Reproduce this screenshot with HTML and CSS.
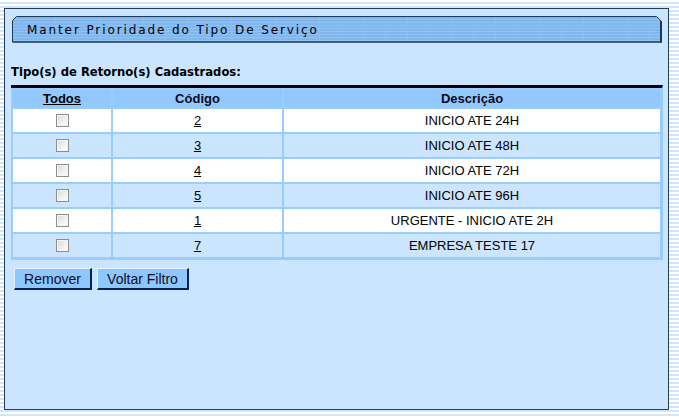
FILE: index.html
```html
<!DOCTYPE html>
<html lang="pt">
<head>
<meta charset="utf-8">
<title>Manter Prioridade do Tipo De Serviço</title>
<link rel="stylesheet" href="styles.css">
</head>
<body>
<div class="panel">
  <div class="titlebar">
    <svg class="titlebar-bg" width="651" height="27" viewBox="0 0 651 27">
      <defs>
        <pattern id="stripes" width="22" height="3" patternUnits="userSpaceOnUse">
          <rect width="22" height="3" fill="#7fb6ee"/>
          <rect width="22" height="1" fill="#92c3f3"/>
          <rect x="21" width="1" height="3" fill="#8bbdf0"/>
        </pattern>
      </defs>
      <path d="M4.5 0.5 H644.5 L649 5 V26 H0.5 V4.5 Z" fill="url(#stripes)" stroke="#1d3a57" stroke-width="1"/>
      <path d="M649 5 V26.5" stroke="#1d3a57" stroke-width="2"/>
      <path d="M0.5 26 H650" stroke="#1d3a57" stroke-width="1.2"/>
    </svg>
    <span class="title-text">Manter Prioridade do Tipo De Serviço</span>
  </div>

  <div class="section-label">Tipo(s) de Retorno(s) Cadastrados:</div>

  <table class="grid">
    <colgroup>
      <col class="c1"><col class="c2"><col class="c3">
    </colgroup>
    <thead>
      <tr>
        <th><a href="#" class="lnk">Todos</a></th>
        <th>Código</th>
        <th>Descrição</th>
      </tr>
    </thead>
    <tbody>
      <tr class="odd"><td><input type="checkbox" class="chk"></td><td><a href="#" class="lnk">2</a></td><td>INICIO ATE 24H</td></tr>
      <tr class="even"><td><input type="checkbox" class="chk"></td><td><a href="#" class="lnk">3</a></td><td>INICIO ATE 48H</td></tr>
      <tr class="odd"><td><input type="checkbox" class="chk"></td><td><a href="#" class="lnk">4</a></td><td>INICIO ATE 72H</td></tr>
      <tr class="even"><td><input type="checkbox" class="chk"></td><td><a href="#" class="lnk">5</a></td><td>INICIO ATE 96H</td></tr>
      <tr class="odd"><td><input type="checkbox" class="chk"></td><td><a href="#" class="lnk">1</a></td><td>URGENTE - INICIO ATE 2H</td></tr>
      <tr class="even"><td><input type="checkbox" class="chk"></td><td><a href="#" class="lnk">7</a></td><td>EMPRESA TESTE 17</td></tr>
    </tbody>
  </table>

  <div class="actions">
    <button type="button" class="btn btn-remover">Remover</button>
    <button type="button" class="btn btn-voltar">Voltar Filtro</button>
  </div>
</div>
</body>
</html>
```

FILE: styles.css
```css
html, body {
  margin: 0;
  padding: 0;
}
body {
  width: 679px;
  height: 417px;
  overflow: hidden;
  background: repeating-linear-gradient(to bottom, #ffffff 0px, #ffffff 2px, #d3e5f6 2px, #d3e5f6 4px);
  font-family: "Liberation Sans", Arial, sans-serif;
}
.panel {
  box-sizing: border-box;
  margin: 8px 0 0 4px;
  width: 665px;
  height: 402px;
  background: #cbe5fe;
  border: 1px solid #23405e;
  padding: 7px 0 0 7px;
}
.titlebar {
  display: grid;
  width: 651px;
  height: 27px;
}
.titlebar-bg,
.title-text {
  grid-area: 1 / 1;
}
.titlebar-bg {
  display: block;
}
.title-text {
  font-family: "DejaVu Sans", Verdana, sans-serif;
  font-size: 12px;
  letter-spacing: 1.9px;
  color: #000;
  padding: 7px 0 0 15px;
  line-height: 14px;
}
.section-label {
  font-family: "DejaVu Sans", Verdana, sans-serif;
  font-weight: bold;
  font-size: 11.6px;
  color: #000;
  margin: 22px 0 0 -1px;
  height: 20px;
  line-height: 14px;
}
.grid {
  margin-left: -1px;
  width: 652px;
  table-layout: fixed;
  border-collapse: separate;
  border-spacing: 2px;
  background: #99ccff;
  border-top: 3px solid #000;
  border-left: 0;
  border-right: 1px solid #99ccff;
  border-bottom: 1px solid #99ccff;
  font-size: 13px;
  color: #000;
}
.c1 { width: 98px; }
.c2 { width: 169px; }
.grid th {
  background: #93c8fd;
  height: 17px;
  padding: 0;
  font-family: "Liberation Sans", Arial, sans-serif;
  font-size: 13px;
  font-weight: bold;
  color: #0a0a20;
  text-align: center;
  line-height: 17px;
}
.grid td {
  height: 23px;
  padding: 0;
  text-align: center;
  line-height: 23px;
}
.odd td { background: #ffffff; }
.even td { background: #cbe5fe; }
.lnk {
  color: #000;
  text-decoration: underline;
}
.chk {
  appearance: none;
  -webkit-appearance: none;
  box-sizing: border-box;
  width: 13px;
  height: 13px;
  margin: 0;
  vertical-align: -2px;
  border: 1px solid #8d8d8d;
  background: linear-gradient(135deg, #d9d9d9 0%, #f2f2f2 60%, #ffffff 100%);
  box-shadow: inset 0 0 0 1px #f6f6f6;
}
.actions {
  display: flex;
  gap: 5px;
  margin: 8px 0 0 2px;
}
.btn {
  box-sizing: border-box;
  height: 22px;
  padding: 0;
  font-family: "Liberation Sans", Arial, sans-serif;
  font-size: 14px;
  color: #0d0d2a;
  background: #8ec7fc;
  border-top: 1px solid #e4f1fe;
  border-left: 1px solid #e4f1fe;
  border-right: 2px solid #0c1f55;
  border-bottom: 2px solid #0c1f55;
}
.btn-remover { width: 78px; }
.btn-voltar { width: 92px; }
```
